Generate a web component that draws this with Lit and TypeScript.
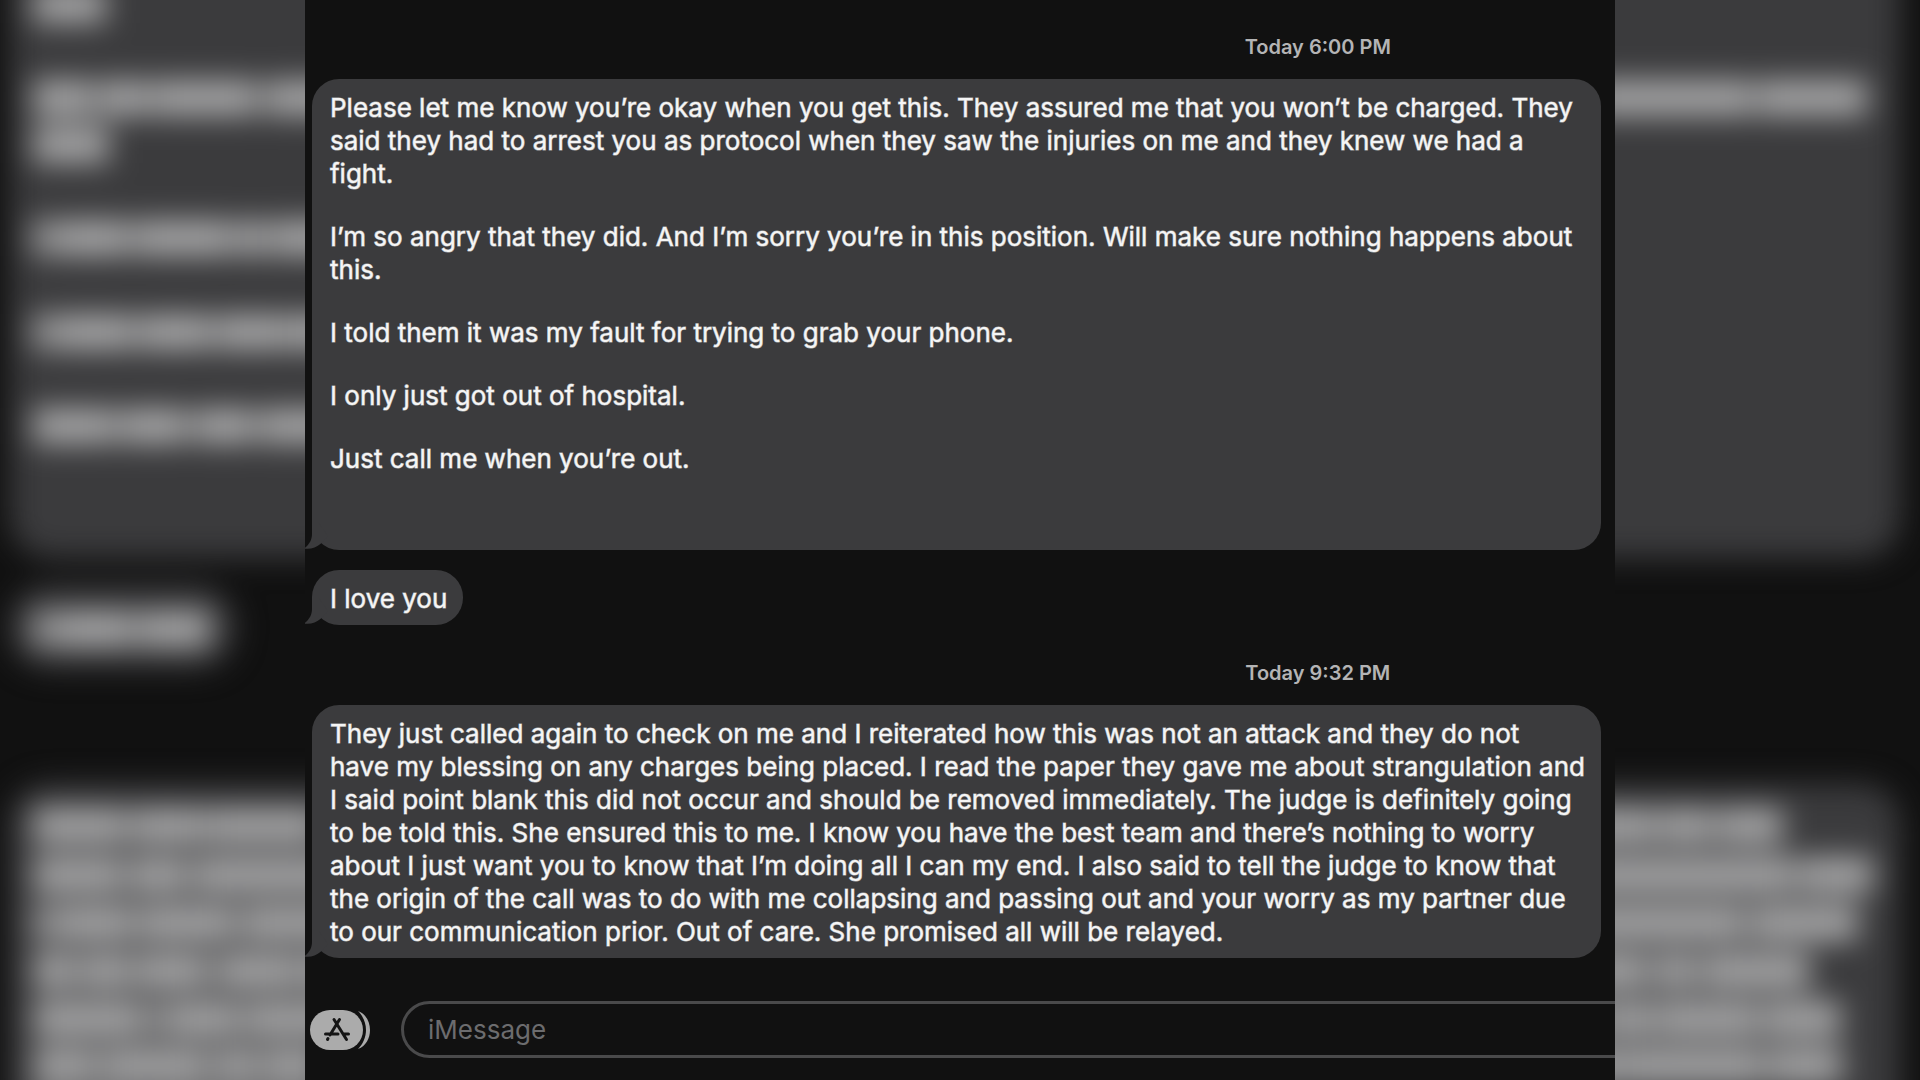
import { LitElement, html, css, svg } from "lit";
import { customElement, property } from "lit/decorators.js";
import { classMap } from "lit/directives/class-map.js";

interface Message {
  paragraphs: string[];
  trailingSpace?: boolean;
}

interface Group {
  time: string;
  messages: Message[];
}

const THREAD: Group[] = [
  {
    time: "Today 6:00 PM",
    messages: [
      {
        trailingSpace: true,
        paragraphs: [
          "Please let me know you’re okay when you get this. They assured me that you won’t be charged. They\nsaid they had to arrest you as protocol when they saw the injuries on me and they knew we had a\nfight.",
          "I’m so angry that they did. And I’m sorry you’re in this position. Will make sure nothing happens about\nthis.",
          "I told them it was my fault for trying to grab your phone.",
          "I only just got out of hospital.",
          "Just call me when you’re out.",
        ],
      },
      { paragraphs: ["I love you"] },
    ],
  },
  {
    time: "Today 9:32 PM",
    messages: [
      {
        paragraphs: [
          "They just called again to check on me and I reiterated how this was not an attack and they do not\nhave my blessing on any charges being placed. I read the paper they gave me about strangulation and\nI said point blank this did not occur and should be removed immediately. The judge is definitely going\nto be told this. She ensured this to me. I know you have the best team and there’s nothing to worry\nabout I just want you to know that I’m doing all I can my end. I also said to tell the judge to know that\nthe origin of the call was to do with me collapsing and passing out and your worry as my partner due\nto our communication prior. Out of care. She promised all will be relayed.",
        ],
      },
    ],
  },
];

/* Rows of soft bars in the backdrop: [centre y, [x start, x end], ...] */
type Row = [number, ...[number, number][]];
const ROWS: Row[] = [
  [4, [37, 102]],
  [97, [37, 90], [103, 144], [155, 254], [269, 336], [1400, 1511], [1522, 1585], [1595, 1749], [1761, 1863]],
  [144, [37, 105]],
  [237, [37, 46], [58, 126], [138, 228], [240, 262], [274, 342]],
  [331, [37, 46], [58, 130], [142, 208], [220, 280], [290, 347]],
  [425, [37, 112], [124, 184], [198, 250], [263, 357]],
  [628, [37, 46], [58, 130], [142, 206]],
  [825, [37, 123], [135, 201], [211, 318], [1380, 1486], [1498, 1563], [1576, 1653], [1664, 1709], [1721, 1779]],
  [874, [37, 120], [133, 184], [197, 345], [1380, 1430], [1442, 1544], [1556, 1791], [1803, 1869]],
  [922, [37, 46], [58, 130], [142, 232], [245, 341], [1420, 1526], [1537, 1565], [1577, 1741], [1754, 1854]],
  [970, [37, 72], [84, 127], [139, 205], [220, 295], [306, 360], [1390, 1500], [1511, 1645], [1659, 1692], [1705, 1806]],
  [1018, [37, 139], [152, 158], [170, 236], [248, 333], [1430, 1491], [1502, 1603], [1614, 1649], [1660, 1755], [1767, 1837]],
  [1065, [37, 93], [105, 205], [218, 253], [265, 320], [1452, 1554], [1565, 1620], [1629, 1760], [1772, 1839]],
  [1113, [37, 72], [84, 141], [154, 415]],
];

@customElement("blurred-backdrop")
class BlurredBackdrop extends LitElement {
  static styles = css`
    :host {
      display: block;
    }
    .art {
      display: block;
      width: 100%;
      height: 100%;
    }
    .base {
      fill: #111111;
    }
    .shape {
      fill: #3b3b3d;
    }
    .word {
      fill: #e6e6e6;
      fill-opacity: 0.62;
    }
  `;

  render() {
    return html`
      <svg class="art" viewBox="0 0 1920 1080" preserveAspectRatio="xMidYMid slice" aria-hidden="true">
        <defs>
          <filter
            id="soft"
            filterUnits="userSpaceOnUse"
            color-interpolation-filters="sRGB"
            x="-100"
            y="-200"
            width="2120"
            height="1480"
          >
            <feGaussianBlur stdDeviation="15" />
          </filter>
        </defs>
        <rect class="base" width="1920" height="1080" />
        <g filter="url(#soft)">
          <rect class="shape" x="10" y="-135" width="1890" height="693" rx="40" />
          <rect class="shape" x="10" y="586" width="225" height="82" rx="40" />
          <rect class="shape" x="10" y="784" width="1890" height="370" rx="40" />
          ${ROWS.map(([y, ...words]) =>
            words.map(
              ([from, to]) =>
                svg`<rect class="word" x=${from - 4} y=${y - 17} width=${to - from + 8} height="36" />`,
            ),
          )}
        </g>
      </svg>
    `;
  }
}

@customElement("message-bubble")
class MessageBubble extends LitElement {
  @property({ attribute: false }) message!: Message;

  static styles = css`
    :host {
      display: block;
      position: relative;
      box-sizing: border-box;
      max-width: 1289px;
      padding: 12px 16px 10px 18px;
      border-radius: 27px;
      background: #3b3b3d;
      color: #f5f5f5;
      font-size: 26px;
      line-height: 33px;
      -webkit-text-stroke: 1px rgba(245, 245, 245, 0.6);
    }
    .text {
      display: flex;
      flex-direction: column;
      gap: 30px;
    }
    .roomy {
      width: 1255px;
      padding-bottom: 65px;
    }
    .paragraph {
      margin: 0;
      white-space: pre;
    }
    .tail {
      position: absolute;
      left: -8px;
      bottom: 0;
      width: 30px;
      height: 28px;
      fill: #3b3b3d;
    }
  `;

  render() {
    return html`
      <svg class="tail" viewBox="0 0 30 28" aria-hidden="true">
        <path d="M8 0V12C8 18 5 23 0 26.500C6 27.500 12 26 17 21.500L24 14L14 0Z" />
      </svg>
      <div class=${classMap({ text: true, roomy: !!this.message.trailingSpace })}>
        ${this.message.paragraphs.map((p) => html`<p class="paragraph">${p}</p>`)}
      </div>
    `;
  }
}

@customElement("message-composer")
class MessageComposer extends LitElement {
  static styles = css`
    :host {
      display: flex;
      align-items: center;
      gap: 29px;
    }
    .apps {
      flex: none;
      padding: 0;
      border: 0;
      background: none;
    }
    .icon {
      display: block;
      width: 62px;
      height: 44px;
    }
    .card,
    .edge {
      fill: #ababab;
    }
    .mark {
      fill: none;
      stroke: #151515;
      stroke-width: 3;
      stroke-linecap: round;
    }
    .field {
      flex: 1;
      min-width: 0;
      box-sizing: border-box;
      height: 57px;
      padding: 0 24px;
      border: 3px solid #4a4a4b;
      border-radius: 29px;
      outline: 0;
      background: transparent;
      color: #f5f5f5;
      font-family: inherit;
      font-size: 26px;
    }
    .field::placeholder {
      color: #6c6c6e;
      opacity: 1;
    }
  `;

  render() {
    return html`
      <button class="apps" type="button" aria-label="Apps">
        <svg class="icon" viewBox="0 0 62 44" aria-hidden="true">
          <rect class="card" x="0" y="2" width="53" height="40" rx="20" />
          <path class="edge" d="M48 3C56 6 60 14 60 22S56 38 48 41C53 36 56 29 56 22S53 8 48 3Z" />
          <path class="mark" d="M24 11.500L36.500 31.500M29.500 11.500L20 27M15.500 26H28M33.500 26H38.500M18 30.500L17.500 31.500" />
        </svg>
      </button>
      <input class="field" type="text" placeholder="iMessage" aria-label="iMessage" />
    `;
  }
}

@customElement("app-root")
class AppRoot extends LitElement {
  static styles = css`
    :host {
      display: grid;
      grid-template-columns: 305fr 1310fr 305fr;
      position: relative;
      min-height: 100vh;
      overflow: hidden;
      background: #111111;
      font-family: Inter, "Liberation Sans", sans-serif;
    }
    .backdrop {
      position: absolute;
      inset: 0;
    }
    .window {
      grid-column: 2;
      position: relative;
      min-width: 0;
      overflow: hidden;
      background: #111111;
    }
    /* The conversation is wider than the window that shows it. */
    .thread {
      display: flex;
      flex-direction: column;
      box-sizing: border-box;
      width: 155%;
      padding: 35px 12px 20px 5px;
    }
    .group {
      display: flex;
      flex-direction: column;
      align-items: flex-start;
      gap: 20px;
      margin-bottom: 36px;
      padding-left: 2px;
    }
    .time {
      align-self: center;
      color: #b4b4b5;
      font-size: 20px;
      font-weight: 600;
      line-height: 24px;
    }
    .composer {
      margin-top: 7px;
    }
  `;

  render() {
    return html`
      <blurred-backdrop class="backdrop"></blurred-backdrop>
      <main class="window">
        <div class="thread">
          ${THREAD.map(
            (group) => html`
              <section class="group">
                <time class="time">${group.time}</time>
                ${group.messages.map((m) => html`<message-bubble .message=${m}></message-bubble>`)}
              </section>
            `,
          )}
          <message-composer class="composer"></message-composer>
        </div>
      </main>
    `;
  }
}
